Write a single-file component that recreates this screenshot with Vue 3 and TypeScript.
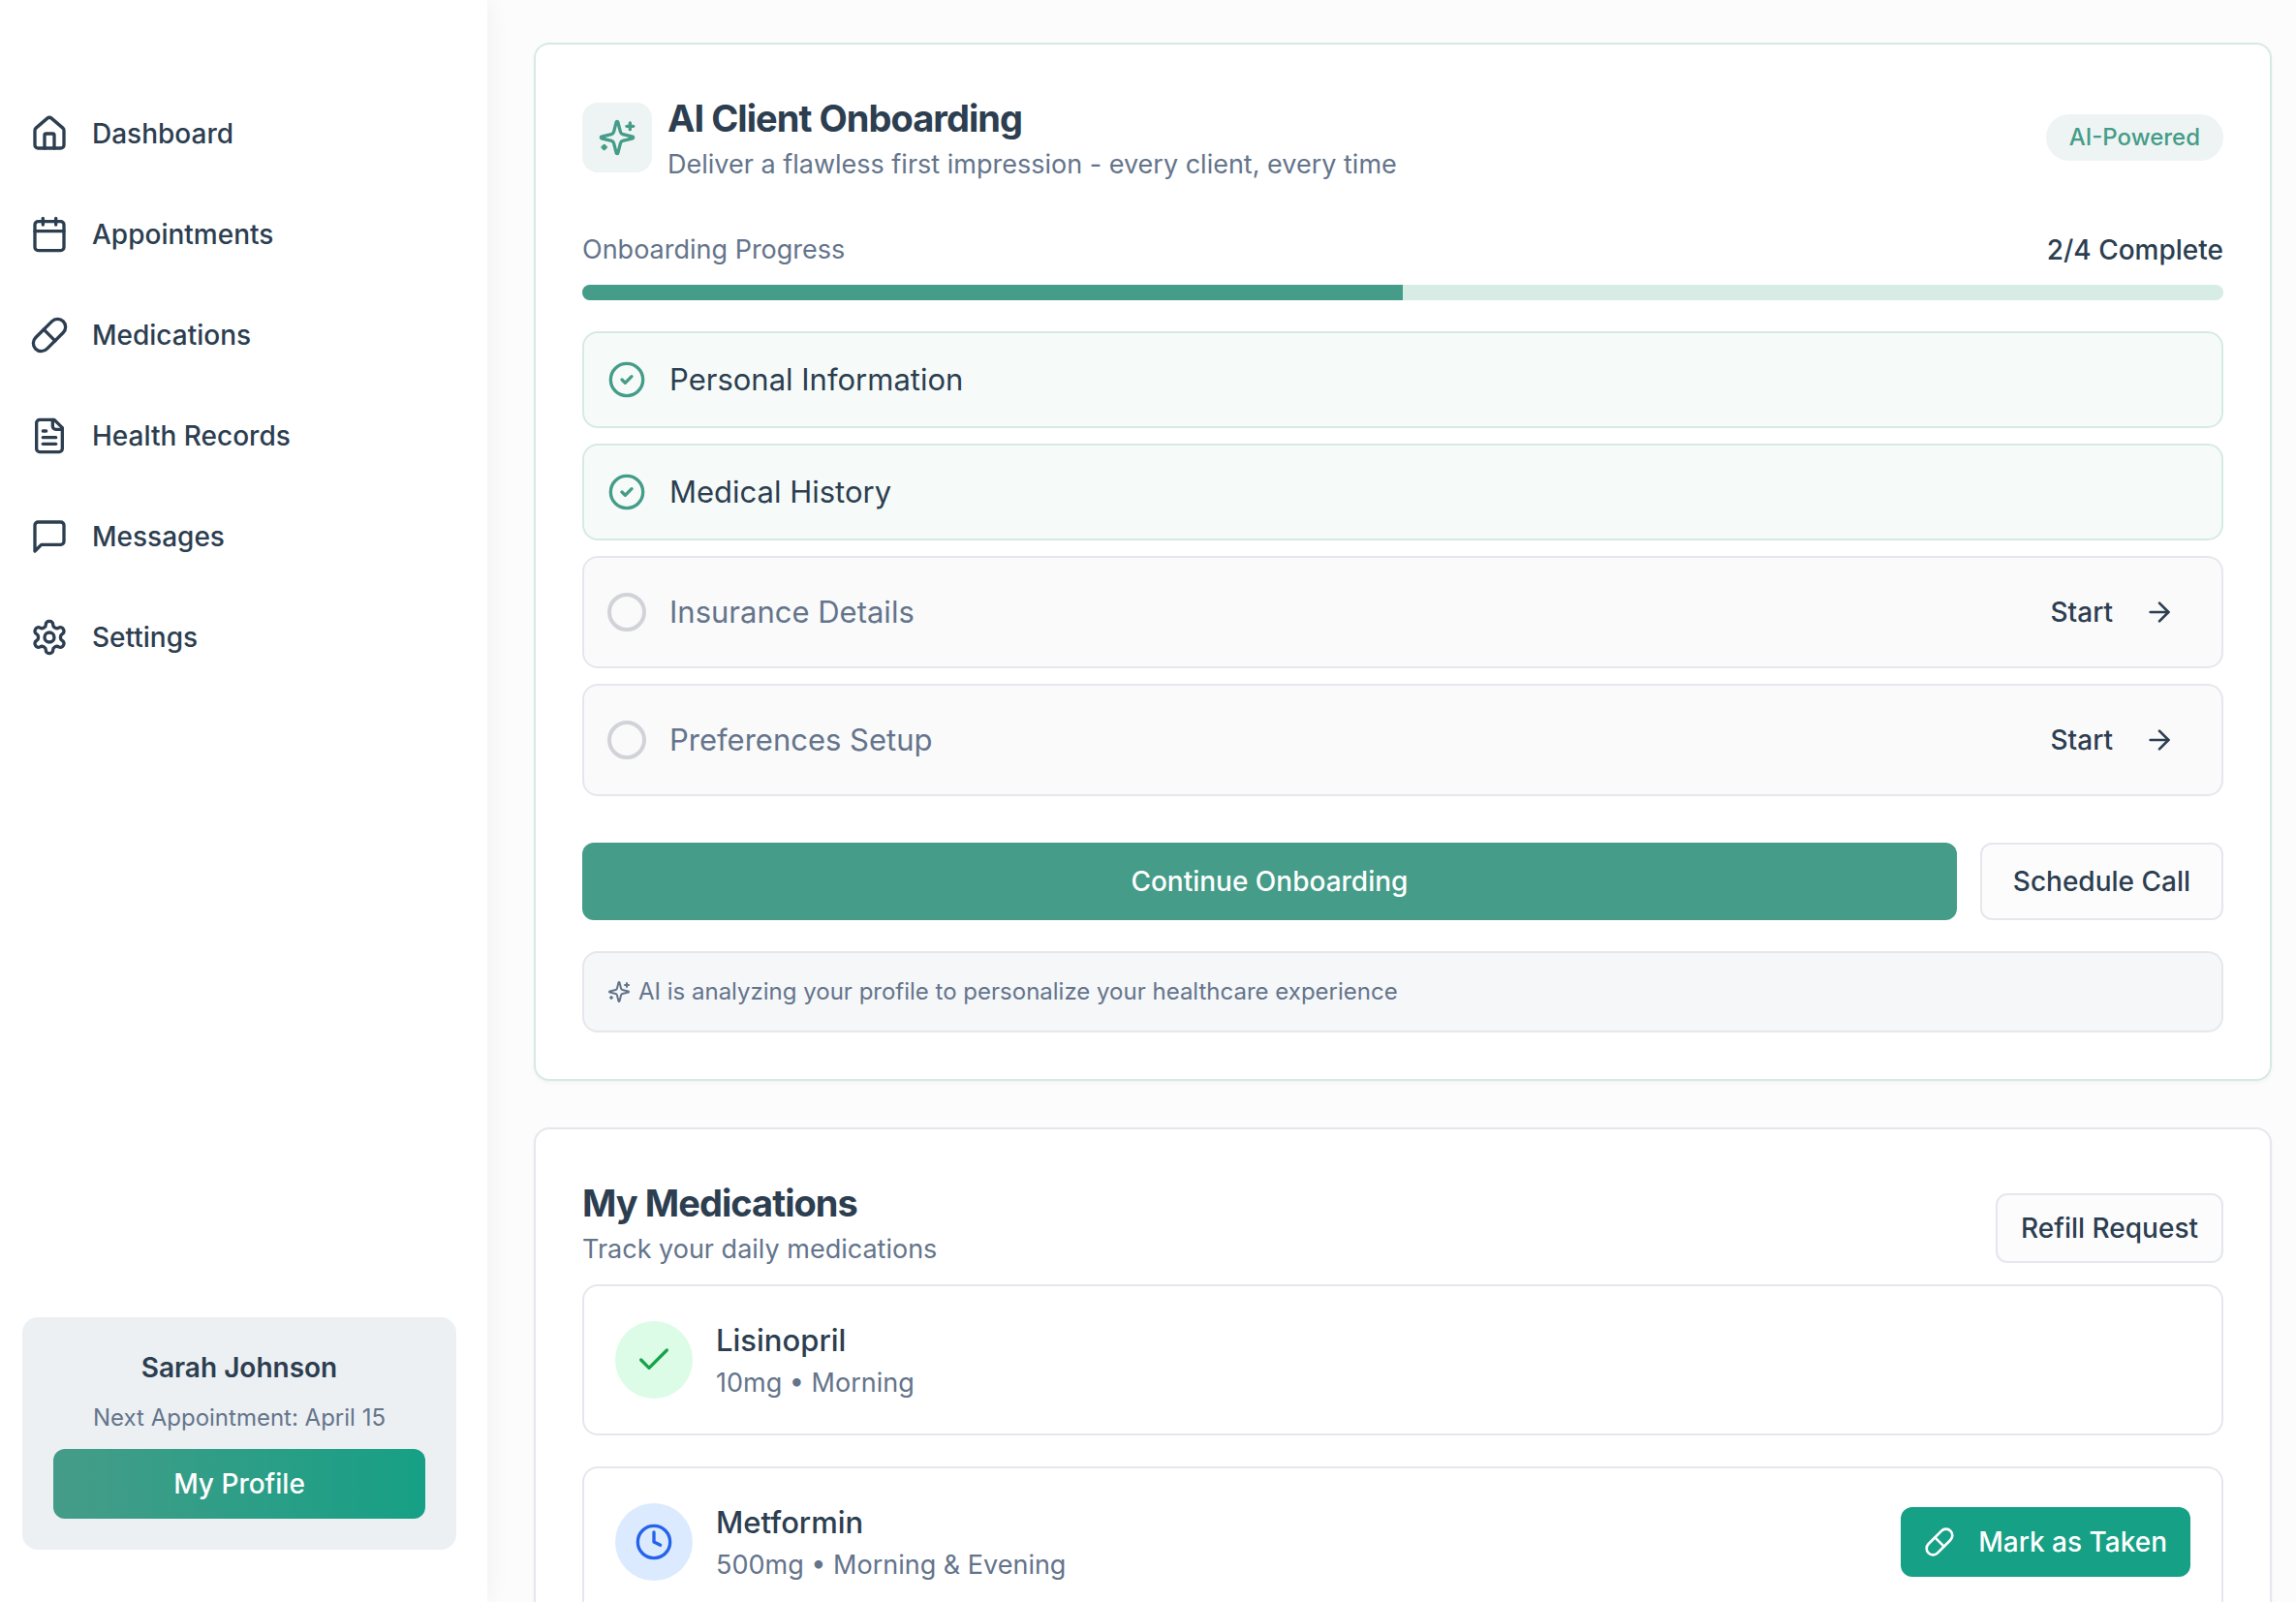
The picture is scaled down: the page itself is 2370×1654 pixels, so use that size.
<script setup lang="ts">
import { computed, h, ref, type FunctionalComponent } from 'vue'

type IconName =
  | 'home' | 'calendar' | 'pill' | 'file' | 'message' | 'settings'
  | 'sparkles' | 'checkCircle' | 'arrow' | 'check' | 'clock'

const iconPaths: Record<IconName, string[]> = {
  home: [
    'M15 21v-8a1 1 0 0 0-1-1h-4a1 1 0 0 0-1 1v8',
    'M3 10a2 2 0 0 1 .709-1.528l7-5.999a2 2 0 0 1 2.582 0l7 5.999A2 2 0 0 1 21 10v9a2 2 0 0 1-2 2H5a2 2 0 0 1-2-2z',
  ],
  calendar: [
    'M8 2v4',
    'M16 2v4',
    'M5 4h14a2 2 0 0 1 2 2v14a2 2 0 0 1-2 2H5a2 2 0 0 1-2-2V6a2 2 0 0 1 2-2z',
    'M3 10h18',
  ],
  pill: ['m10.5 20.5 10-10a4.95 4.95 0 1 0-7-7l-10 10a4.95 4.95 0 1 0 7 7Z', 'm8.5 8.5 7 7'],
  file: [
    'M15 2H6a2 2 0 0 0-2 2v16a2 2 0 0 0 2 2h12a2 2 0 0 0 2-2V7Z',
    'M14 2v4a2 2 0 0 0 2 2h4',
    'M10 9H8',
    'M16 13H8',
    'M16 17H8',
  ],
  message: ['M21 15a2 2 0 0 1-2 2H7l-4 4V5a2 2 0 0 1 2-2h14a2 2 0 0 1 2 2z'],
  settings: [
    'M12.22 2h-.44a2 2 0 0 0-2 2v.18a2 2 0 0 1-1 1.73l-.43.25a2 2 0 0 1-2 0l-.15-.08a2 2 0 0 0-2.73.73l-.22.38a2 2 0 0 0 .73 2.73l.15.1a2 2 0 0 1 1 1.72v.51a2 2 0 0 1-1 1.74l-.15.09a2 2 0 0 0-.73 2.73l.22.38a2 2 0 0 0 2.73.73l.15-.08a2 2 0 0 1 2 0l.43.25a2 2 0 0 1 1 1.73V20a2 2 0 0 0 2 2h.44a2 2 0 0 0 2-2v-.18a2 2 0 0 1 1-1.73l.43-.25a2 2 0 0 1 2 0l.15.08a2 2 0 0 0 2.73-.73l.22-.39a2 2 0 0 0-.73-2.73l-.15-.08a2 2 0 0 1-1-1.74v-.5a2 2 0 0 1 1-1.74l.15-.09a2 2 0 0 0 .73-2.73l-.22-.38a2 2 0 0 0-2.73-.73l-.15.08a2 2 0 0 1-2 0l-.43-.25a2 2 0 0 1-1-1.73V4a2 2 0 0 0-2-2z',
    'M15 12a3 3 0 1 1-6 0a3 3 0 0 1 6 0z',
  ],
  sparkles: [
    'M9.937 15.5A2 2 0 0 0 8.5 14.063l-6.135-1.582a.5.5 0 0 1 0-.962L8.5 9.936A2 2 0 0 0 9.937 8.5l1.582-6.135a.5.5 0 0 1 .963 0L14.063 8.5A2 2 0 0 0 15.5 9.937l6.135 1.581a.5.5 0 0 1 0 .964L15.5 14.063a2 2 0 0 0-1.437 1.437l-1.582 6.135a.5.5 0 0 1-.963 0z',
    'M20 3v4',
    'M22 5h-4',
    'M4 17v2',
    'M5 18H3',
  ],
  checkCircle: ['M22 12a10 10 0 1 1-20 0a10 10 0 0 1 20 0z', 'm9 12 2 2 4-4'],
  arrow: ['M5 12h14', 'm12 5 7 7-7 7'],
  check: ['M20 6 9 17l-5-5'],
  clock: ['M22 12a10 10 0 1 1-20 0a10 10 0 0 1 20 0z', 'M12 6v6l4 2'],
}

const Icon: FunctionalComponent<{ name: IconName; size?: number }> = (props) =>
  h(
    'svg',
    {
      width: props.size ?? 40,
      height: props.size ?? 40,
      viewBox: '0 0 24 24',
      fill: 'none',
      stroke: 'currentColor',
      'stroke-width': 2,
      'stroke-linecap': 'round',
      'stroke-linejoin': 'round',
      'aria-hidden': 'true',
    },
    iconPaths[props.name].map((d) => h('path', { d })),
  )
Icon.props = ['name', 'size']

const navItems: { label: string; icon: IconName }[] = [
  { label: 'Dashboard', icon: 'home' },
  { label: 'Appointments', icon: 'calendar' },
  { label: 'Medications', icon: 'pill' },
  { label: 'Health Records', icon: 'file' },
  { label: 'Messages', icon: 'message' },
  { label: 'Settings', icon: 'settings' },
]

const steps = ref([
  { label: 'Personal Information', done: true },
  { label: 'Medical History', done: true },
  { label: 'Insurance Details', done: false },
  { label: 'Preferences Setup', done: false },
])
const doneCount = computed(() => steps.value.filter((s) => s.done).length)
const progress = computed(() => (doneCount.value / steps.value.length) * 100)

const medications = ref([
  { name: 'Lisinopril', detail: '10mg • Morning', taken: true },
  { name: 'Metformin', detail: '500mg • Morning & Evening', taken: false },
])
</script>

<template>
  <div class="layout">
    <aside class="sidebar">
      <nav class="nav" aria-label="Main">
        <a v-for="item in navItems" :key="item.label" href="#" class="nav-link">
          <Icon :name="item.icon" />
          {{ item.label }}
        </a>
      </nav>
      <section class="profile">
        <p class="profile-name">Sarah Johnson</p>
        <p class="profile-next">Next Appointment: April 15</p>
        <button type="button" class="btn btn-profile">My Profile</button>
      </section>
    </aside>

    <main class="main">
      <section class="card card-accent">
        <header class="card-head">
          <div class="head-icon"><Icon name="sparkles" /></div>
          <div class="head-text">
            <h2 class="title">AI Client Onboarding</h2>
            <p class="subtitle">Deliver a flawless first impression - every client, every time</p>
          </div>
          <span class="badge">AI-Powered</span>
        </header>

        <div class="progress-row">
          <span id="progress-label" class="progress-label">Onboarding Progress</span>
          <span class="progress-value">{{ doneCount }}/{{ steps.length }} Complete</span>
        </div>
        <div
          class="track"
          role="progressbar"
          aria-labelledby="progress-label"
          :aria-valuenow="progress"
          aria-valuemin="0"
          aria-valuemax="100"
        >
          <div class="fill" :style="{ width: progress + '%' }"></div>
        </div>

        <ul class="steps">
          <li v-for="step in steps" :key="step.label" class="step" :class="{ done: step.done }">
            <Icon v-if="step.done" name="checkCircle" />
            <span v-else class="ring"></span>
            <span class="step-label">{{ step.label }}</span>
            <button v-if="!step.done" type="button" class="btn-start" @click="step.done = true">
              Start
              <Icon name="arrow" :size="32" />
            </button>
          </li>
        </ul>

        <div class="actions">
          <button type="button" class="btn btn-primary">Continue Onboarding</button>
          <button type="button" class="btn btn-outline btn-schedule">Schedule Call</button>
        </div>

        <p class="note">
          <Icon name="sparkles" :size="24" />
          <span>AI is analyzing your profile to personalize your healthcare experience</span>
        </p>
      </section>

      <section class="card">
        <header class="card-head meds-head">
          <div class="head-text">
            <h2 class="title">My Medications</h2>
            <p class="subtitle">Track your daily medications</p>
          </div>
          <button type="button" class="btn btn-outline btn-refill">Refill Request</button>
        </header>

        <ul class="meds">
          <li v-for="med in medications" :key="med.name" class="med">
            <span class="med-status" :class="med.taken ? 'taken' : 'due'">
              <Icon :name="med.taken ? 'check' : 'clock'" />
            </span>
            <div class="head-text">
              <h3 class="med-name">{{ med.name }}</h3>
              <p class="subtitle">{{ med.detail }}</p>
            </div>
            <button v-if="!med.taken" type="button" class="btn btn-taken" @click="med.taken = true">
              <Icon name="pill" :size="32" />
              Mark as Taken
            </button>
          </li>
        </ul>
      </section>
    </main>
  </div>
</template>

<style>
body {
  margin: 0;
  background: #fcfcfc;
}
</style>

<style scoped>
.layout {
  --ink: #2c3e50;
  --muted: #64748b;
  --primary: #459c88;
  --accent: #16a085;
  --line: #e4e7ec;
  --mint-line: #d6eae4;
  display: flex;
  align-items: flex-start;
  min-height: 100vh;
  color: var(--ink);
  font-family: Inter, 'Liberation Sans', sans-serif;
  font-size: 28px;
  line-height: 40px;
}

.layout *,
.layout {
  box-sizing: border-box;
}

h2,
h3,
p,
ul {
  margin: 0;
  padding: 0;
}

ul {
  list-style: none;
}

svg {
  flex: none;
  display: block;
}

button {
  font: inherit;
  color: inherit;
  cursor: pointer;
  white-space: nowrap;
}

.sidebar {
  position: sticky;
  top: 0;
  flex: none;
  display: flex;
  flex-direction: column;
  justify-content: space-between;
  width: 503px;
  height: 100vh;
  padding: 94px 32px 54px 23px;
  background: #fff;
  box-shadow: 0 0 24px rgba(0, 0, 0, 0.06);
}

.nav {
  display: flex;
  flex-direction: column;
  gap: 16px;
}

.nav-link {
  display: flex;
  align-items: center;
  gap: 24px;
  height: 88px;
  padding: 0 8px;
  color: inherit;
  font-weight: 500;
  text-decoration: none;
}

.profile {
  display: flex;
  flex-direction: column;
  gap: 16px;
  padding: 32px;
  border-radius: 16px;
  background: #ecf0f3;
  text-align: center;
}

.profile-name {
  font-weight: 600;
}

.profile-next {
  color: var(--muted);
  font-size: 24px;
  line-height: 32px;
}

.btn {
  display: flex;
  align-items: center;
  justify-content: center;
  height: 72px;
  padding: 0 24px;
  border: 0;
  border-radius: 12px;
  font-weight: 500;
}

.btn-profile {
  background: linear-gradient(90deg, var(--primary), var(--accent));
  color: #fff;
}

.main {
  flex: 1;
  min-width: 0;
  display: flex;
  flex-direction: column;
  gap: 48px;
  padding: 44px 25px 48px 48px;
}

.card {
  padding: 48px;
  border: 2px solid var(--line);
  border-radius: 16px;
  background: #fff;
  box-shadow: 0 2px 4px rgba(0, 0, 0, 0.04);
}

.card-accent {
  border-color: var(--mint-line);
}

.card-head {
  display: flex;
  align-items: center;
  gap: 16px;
  margin-bottom: 48px;
}

.head-icon {
  display: grid;
  place-items: center;
  width: 72px;
  height: 72px;
  border-radius: 16px;
  background: #eef4f3;
  color: var(--primary);
}

.head-text {
  flex: 1;
  min-width: 0;
}

.title {
  font-size: 38px;
  line-height: 56px;
  font-weight: 700;
  letter-spacing: -0.025em;
}

.subtitle,
.progress-label {
  color: var(--muted);
  font-size: 27px;
}

.badge {
  padding: 8px 24px;
  border-radius: 24px;
  background: #eef4f3;
  color: var(--primary);
  font-size: 24px;
  line-height: 32px;
  font-weight: 500;
}

.progress-row {
  display: flex;
  justify-content: space-between;
  margin-bottom: 16px;
}

.progress-value {
  font-weight: 500;
}

.track {
  height: 16px;
  margin-bottom: 32px;
  overflow: hidden;
  border-radius: 8px;
  background: #d6ece5;
}

.fill {
  height: 100%;
  background: var(--primary);
}

.steps {
  display: flex;
  flex-direction: column;
  gap: 16px;
}

.step {
  display: flex;
  align-items: center;
  gap: 24px;
  padding: 24px;
  border: 2px solid var(--line);
  border-radius: 16px;
  background: #fafafb;
  color: var(--muted);
}

.step.done {
  border-color: var(--mint-line);
  background: #f6fbf9;
  color: var(--primary);
}

.step-label {
  flex: 1;
  font-size: 31px;
  line-height: 48px;
}

.done .step-label {
  color: var(--ink);
}

.ring {
  width: 40px;
  height: 40px;
  border: 4px solid #d1d3d8;
  border-radius: 50%;
}

.btn-start {
  display: flex;
  align-items: center;
  gap: 32px;
  height: 64px;
  padding: 0 24px;
  border: 0;
  background: none;
  color: var(--ink);
  font-weight: 500;
}

.actions {
  display: flex;
  gap: 24px;
  margin: 48px 0 32px;
}

.actions .btn {
  height: 80px;
}

.btn-primary {
  flex: 1;
  background: var(--primary);
  color: #fff;
}

.btn-outline {
  border: 2px solid var(--line);
  background: #fcfcfd;
}

.actions .btn-schedule {
  padding: 0 32px;
}

.note {
  display: flex;
  align-items: center;
  gap: 8px;
  padding: 24px;
  border: 2px solid var(--line);
  border-radius: 16px;
  background: #f5f7f9;
  color: var(--muted);
  font-size: 24px;
  line-height: 32px;
}

.meds-head {
  margin-bottom: 4px;
}

.meds-head .head-text {
  padding-bottom: 12px;
}

.meds {
  display: flex;
  flex-direction: column;
  gap: 32px;
}

.med {
  display: flex;
  align-items: center;
  gap: 24px;
  padding: 32px;
  border: 2px solid var(--line);
  border-radius: 16px;
}

.med-status {
  display: grid;
  place-items: center;
  width: 80px;
  height: 80px;
  border-radius: 50%;
}

.taken {
  background: #dcfce7;
  color: #16a34a;
}

.due {
  background: #dbeafe;
  color: #2563eb;
}

.med-name {
  font-size: 31px;
  line-height: 48px;
  font-weight: 500;
}

.btn-taken {
  gap: 24px;
  background: var(--accent);
  color: #fff;
}
</style>
